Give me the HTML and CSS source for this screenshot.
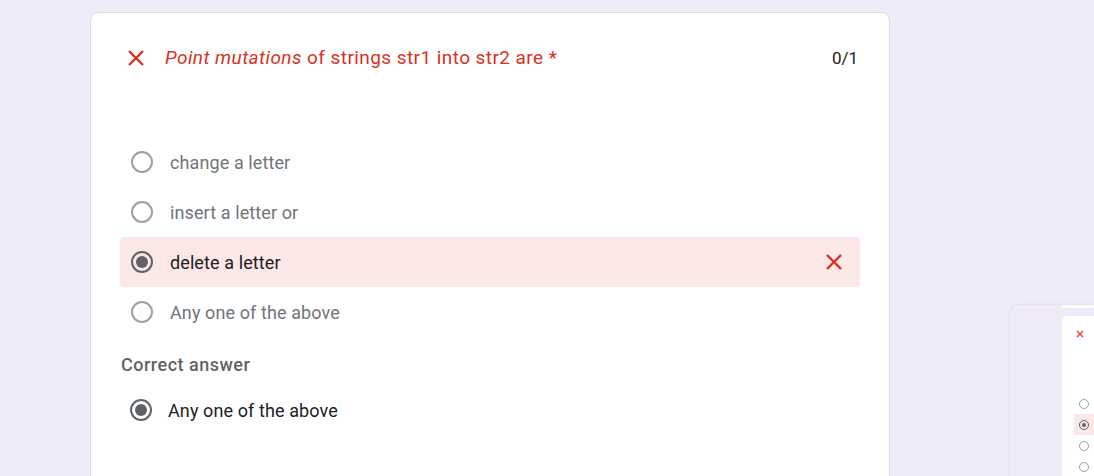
FILE: index.html
```html
<!DOCTYPE html>
<html lang="en">
<head>
<meta charset="utf-8">
<title>Quiz result</title>
<link rel="stylesheet" href="styles.css">
</head>
<body>
<div class="page">
  <div class="card">
    <div class="q-head">
      <svg class="x-icon" viewBox="0 0 24 24" width="24" height="24"><path d="M5 5L19 19M19 5L5 19" stroke="#d93025" stroke-width="2.4" fill="none"/></svg>
      <div class="q-title"><i>Point mutations</i> of strings str1 into str2 are *</div>
      <div class="q-score">0/1</div>
    </div>
    <div class="options">
      <div class="opt"><span class="radio"></span><span class="opt-text">change a letter</span></div>
      <div class="opt"><span class="radio"></span><span class="opt-text">insert a letter or</span></div>
      <div class="opt opt-wrong"><span class="radio radio-on"></span><span class="opt-text">delete a letter</span>
        <svg class="x-icon x-right" viewBox="0 0 24 24" width="24" height="24"><path d="M5 5L19 19M19 5L5 19" stroke="#d93025" stroke-width="2.4" fill="none"/></svg>
      </div>
      <div class="opt"><span class="radio"></span><span class="opt-text">Any one of the above</span></div>
    </div>
    <div class="correct-label">Correct answer</div>
    <div class="correct-row"><span class="radio radio-on"></span><span class="correct-text">Any one of the above</span></div>
  </div>
</div>
<div class="thumb">
  <div class="thumb-strip"></div>
  <div class="thumb-card">
    <svg class="thumb-x" viewBox="0 0 8 8" width="8" height="8"><path d="M1 1L7 7M7 1L1 7" stroke="#d93025" stroke-width="1.1" fill="none"/></svg>
    <div class="thumb-opts">
      <div class="t-opt"><span class="t-radio"></span></div>
      <div class="t-opt t-wrong"><span class="t-radio t-on"></span></div>
      <div class="t-opt"><span class="t-radio"></span></div>
      <div class="t-opt"><span class="t-radio"></span></div>
    </div>
  </div>
</div>
</body>
</html>
```
FILE: styles.css
```css
html, body {
  margin: 0;
  padding: 0;
  height: 100%;
  overflow: hidden;
}
body {
  background: #f0ebf8;
  font-family: Roboto, "Liberation Sans", Arial, sans-serif;
  position: relative;
}
.page {
  padding: 12px 0 0 90px;
}
.card {
  box-sizing: border-box;
  width: 800px;
  height: 500px;
  background: #fff;
  border: 1px solid #dadce0;
  border-radius: 8px;
}
.q-head {
  display: flex;
  align-items: center;
  padding: 33px 31px 0 33px;
  height: 24px;
}
.x-icon {
  flex: none;
  display: block;
}
.q-title {
  margin-left: 17px;
  flex: 1;
  color: #d93025;
  font-size: 19px;
  line-height: 24px;
  letter-spacing: 0.43px;
}
.q-score {
  color: #202124;
  font-size: 17px;
  line-height: 24px;
}
.options {
  margin: 67px 29px 0 29px;
}
.opt {
  display: flex;
  align-items: center;
  height: 50px;
  padding: 0 14px 0 11px;
  border-radius: 4px;
}
.opt-wrong {
  background: #fce8e6;
}
.radio {
  flex: none;
  box-sizing: border-box;
  width: 22px;
  height: 22px;
  border: 2px solid #9aa0a6;
  border-radius: 50%;
  position: relative;
}
.radio-on {
  border-color: #5f6368;
}
.radio-on::after {
  content: "";
  position: absolute;
  left: 3px;
  top: 3px;
  width: 12px;
  height: 12px;
  border-radius: 50%;
  background: #5f6368;
}
.opt-text {
  margin-left: 17px;
  flex: 1;
  font-size: 18px;
  letter-spacing: 0.1px;
  color: #70757a;
}
.opt-wrong .opt-text {
  color: #202124;
}
.correct-label {
  margin: 16px 0 0 30px;
  font-size: 18px;
  line-height: 24px;
  font-weight: 500;
  letter-spacing: 0.5px;
  color: #5f6368;
}
.correct-row {
  display: flex;
  align-items: center;
  height: 40px;
  margin: 13px 0 0 39px;
}
.correct-text {
  margin-left: 16px;
  font-size: 18px;
  letter-spacing: 0.1px;
  color: #202124;
}
.thumb {
  position: absolute;
  left: 1010px;
  top: 305px;
  width: 120px;
  height: 200px;
  background: #eeeaf8;
  border-radius: 9px;
  box-shadow: 0 0 3px rgba(60, 40, 120, 0.12);
}
.thumb-strip {
  position: absolute;
  left: 52px;
  right: 0;
  top: 0;
  height: 3px;
  background: #fff;
}
.thumb-card {
  position: absolute;
  left: 52px;
  top: 11px;
  right: 0;
  bottom: 0;
  background: #fff;
  border-radius: 4px 0 0 0;
}
.thumb-x {
  position: absolute;
  left: 14px;
  top: 14px;
}
.thumb-opts {
  position: absolute;
  left: 12px;
  top: 77px;
  right: 0;
}
.t-opt {
  height: 21px;
  display: flex;
  align-items: center;
  padding-left: 5px;
}
.t-wrong {
  background: #fce8e6;
}
.t-radio {
  box-sizing: border-box;
  width: 10px;
  height: 10px;
  border: 1px solid #9aa0a6;
  border-radius: 50%;
  position: relative;
}
.t-on {
  border-color: #5f6368;
}
.t-on::after {
  content: "";
  position: absolute;
  left: 2px;
  top: 2px;
  width: 4px;
  height: 4px;
  border-radius: 50%;
  background: #5f6368;
}
```
